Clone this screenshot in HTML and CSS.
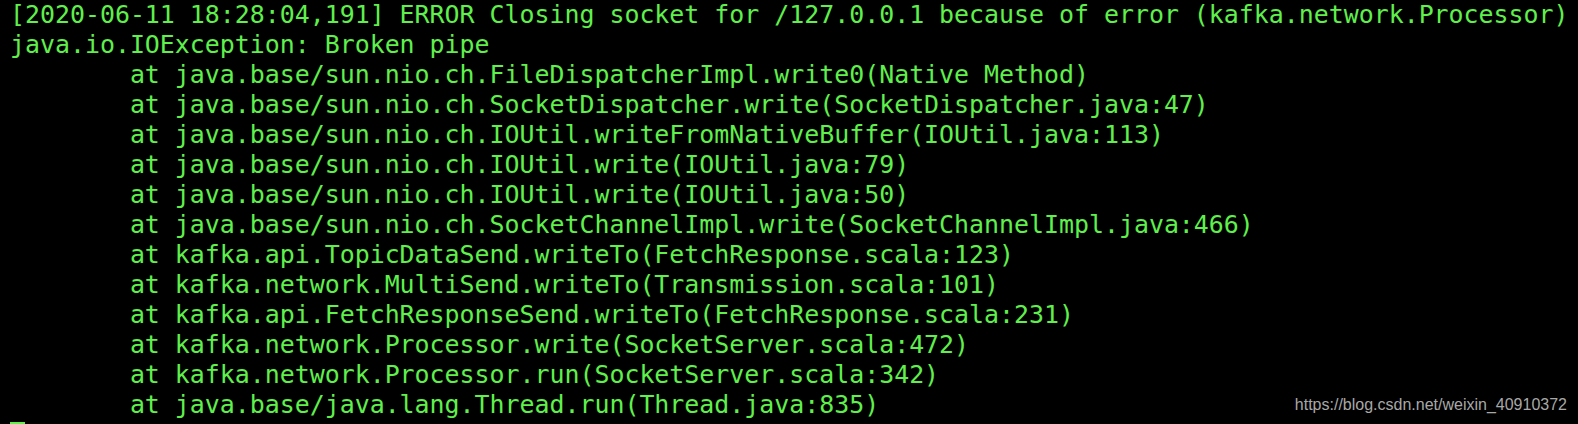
FILE: index.html
```html
<!DOCTYPE html>
<html>
<head>
<meta charset="utf-8">
<link rel="stylesheet" href="styles.css">
</head>
<body>
<div class="term">
<pre class="log">[2020-06-11 18:28:04,191] ERROR Closing socket for /127.0.0.1 because of error (kafka.network.Processor)
java.io.IOException: Broken pipe
        at java.base/sun.nio.ch.FileDispatcherImpl.write0(Native Method)
        at java.base/sun.nio.ch.SocketDispatcher.write(SocketDispatcher.java:47)
        at java.base/sun.nio.ch.IOUtil.writeFromNativeBuffer(IOUtil.java:113)
        at java.base/sun.nio.ch.IOUtil.write(IOUtil.java:79)
        at java.base/sun.nio.ch.IOUtil.write(IOUtil.java:50)
        at java.base/sun.nio.ch.SocketChannelImpl.write(SocketChannelImpl.java:466)
        at kafka.api.TopicDataSend.writeTo(FetchResponse.scala:123)
        at kafka.network.MultiSend.writeTo(Transmission.scala:101)
        at kafka.api.FetchResponseSend.writeTo(FetchResponse.scala:231)
        at kafka.network.Processor.write(SocketServer.scala:472)
        at kafka.network.Processor.run(SocketServer.scala:342)
        at java.base/java.lang.Thread.run(Thread.java:835)
<span class="cursor"> </span></pre>
<div class="watermark">https://blog.csdn.net/weixin_40910372</div>
</div>
</body>
</html>
```
FILE: styles.css
```css
html, body {
  margin: 0;
  padding: 0;
  background: #000;
  overflow: hidden;
}
.term {
  position: relative;
  width: 1578px;
  height: 424px;
  background: #000;
  overflow: hidden;
}
.log {
  margin: 0;
  padding: 0 0 0 10px;
  font-family: "DejaVu Sans Mono", monospace;
  font-size: 24.9px;
  line-height: 30px;
  color: #5ff04c;
  white-space: pre;
}
.cursor {
  display: inline-block;
  width: 15px;
  height: 30px;
  vertical-align: top;
  margin-top: 2px;
  background: #5ff04c;
}
.watermark {
  position: absolute;
  right: 11px;
  top: 396px;
  font-family: "Liberation Sans", Arial, sans-serif;
  font-size: 16px;
  line-height: 18px;
  color: #a8a8a8;
}
```
